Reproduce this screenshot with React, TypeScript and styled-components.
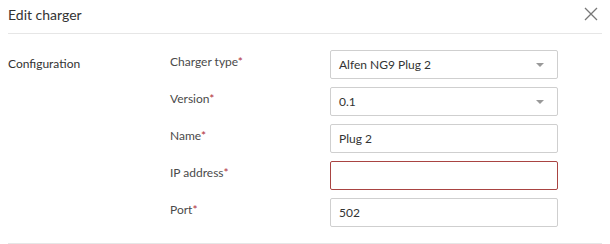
import React from "react";
import styled, { createGlobalStyle } from "styled-components";

const Global = createGlobalStyle`
  html, body { margin: 0; padding: 0; background: #fff; }
  body { font-family: Lato, "Open Sans", sans-serif; color: #333; }
`;

const Dialog = styled.div`
  width: 610px;
  height: 244px;
  box-sizing: border-box;
  padding: 0 8px;
  display: flex;
  flex-direction: column;
`;

const Header = styled.div`
  height: 33px;
  display: flex;
  align-items: center;
  justify-content: space-between;
  border-bottom: 1px solid #e6e6e6;
`;

const Title = styled.h1`
  margin: 0;
  font-size: 14px;
  font-weight: 400;
  color: #333;
  padding-bottom: 4px;
`;

const Close = styled.button`
  border: 0;
  background: none;
  padding: 0;
  width: 14px;
  height: 14px;
  margin: 0 4px 6px 0;
  display: flex;
  cursor: pointer;
`;

const Body = styled.div`
  flex: 1;
  display: grid;
  grid-template-columns: 162px 160px 227px;
  padding-top: 16px;
  border-bottom: 1px solid #e6e6e6;
  margin-bottom: 0;
`;

const Section = styled.div`
  font-size: 12px;
  color: #333;
  padding-top: 6px;
`;

const Fields = styled.div`
  grid-column: 2 / 4;
  display: flex;
  flex-direction: column;
  gap: 8px;
`;

const Row = styled.div`
  display: grid;
  grid-template-columns: 160px 228px;
  align-items: start;
`;

const Label = styled.label`
  font-size: 12px;
  color: #4a4a4a;
  padding-top: 4px;
`;

const Req = styled.span`
  color: #b0303a;
`;

const Box = styled.div<{ $error?: boolean }>`
  height: 29px;
  box-sizing: border-box;
  border: 1px solid ${(p) => (p.$error ? "#a94442" : "#cfcfcf")};
  border-radius: 2px;
  display: flex;
  align-items: center;
  padding: 0 8px;
  font-size: 12px;
  color: #333;
  background: #fff;
`;

const Value = styled.span`
  flex: 1;
`;

const Caret = styled.span`
  width: 0;
  height: 0;
  border-left: 4px solid transparent;
  border-right: 4px solid transparent;
  border-top: 4px solid #999;
  margin-right: 5px;
`;

const fields = [
  { label: "Charger type", value: "Alfen NG9 Plug 2", select: true },
  { label: "Version", value: "0.1", select: true },
  { label: "Name", value: "Plug 2" },
  { label: "IP address", value: "", error: true },
  { label: "Port", value: "502" },
];

export default function App() {
  return (
    <>
      <Global />
      <Dialog>
        <Header>
          <Title>Edit charger</Title>
          <Close aria-label="Close">
            <svg width="14" height="14" viewBox="0 0 14 14">
              <path d="M1 1L13 13M13 1L1 13" stroke="#777" strokeWidth="1.3" fill="none" />
            </svg>
          </Close>
        </Header>
        <Body>
          <Section>Configuration</Section>
          <Fields>
            {fields.map((f) => (
              <Row key={f.label}>
                <Label>
                  {f.label}
                  <Req>*</Req>
                </Label>
                <Box $error={f.error}>
                  <Value>{f.value}</Value>
                  {f.select && <Caret />}
                </Box>
              </Row>
            ))}
          </Fields>
        </Body>
      </Dialog>
    </>
  );
}
